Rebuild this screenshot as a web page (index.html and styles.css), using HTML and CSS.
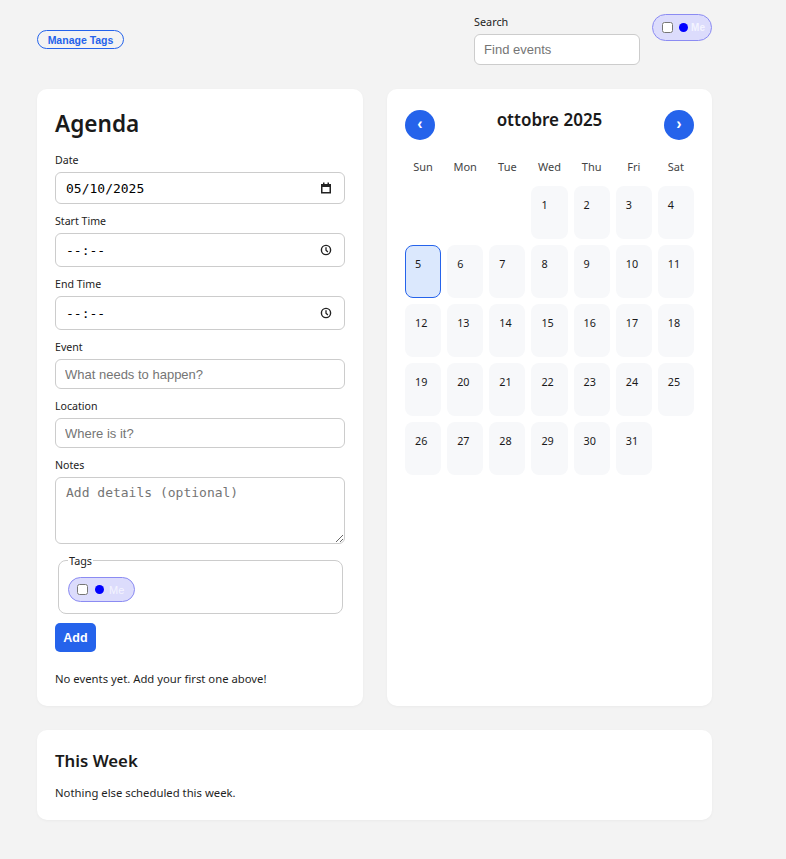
FILE: index.html
```html
<!DOCTYPE html>
<html lang="it">
<head>
<meta charset="utf-8">
<title>Agenda</title>
<link rel="stylesheet" href="styles.css">
</head>
<body>
<div class="page">
  <header class="topbar">
    <button class="manage-btn">Manage Tags</button>
    <div class="top-right">
      <div class="search">
        <label class="search-label" for="search">Search</label>
        <input id="search" class="search-input" type="text" placeholder="Find events">
      </div>
      <label class="pill pill-top"><input type="checkbox"><span class="dot"></span><span class="pill-text bold">Me</span></label>
    </div>
  </header>

  <div class="columns">
    <section class="card agenda">
      <h1 class="title">Agenda</h1>
      <div class="field">
        <label class="lbl">Date</label>
        <div class="inp picker date">
          <input class="picker-value" type="text" value="05/10/2025">
          <svg class="picker-icon" width="12" height="12" viewBox="0 0 12 12"><rect x="1.75" y="2.75" width="8.5" height="8" fill="none" stroke="#222" stroke-width="1.5"/><rect x="1" y="2" width="10" height="3" fill="#222"/><rect x="3" y="0.5" width="1.5" height="2" fill="#222"/><rect x="7.5" y="0.5" width="1.5" height="2" fill="#222"/></svg>
        </div>
      </div>
      <div class="field">
        <label class="lbl">Start Time</label>
        <div class="inp picker time">
          <input class="picker-value" type="text" value="--:--">
          <svg class="picker-icon" width="12" height="12" viewBox="0 0 12 12"><circle cx="6" cy="6" r="4.6" fill="none" stroke="#222" stroke-width="1.4"/><path d="M6 3.2V6.2L7.9 8" fill="none" stroke="#222" stroke-width="1.3"/></svg>
        </div>
      </div>
      <div class="field">
        <label class="lbl">End Time</label>
        <div class="inp picker time">
          <input class="picker-value" type="text" value="--:--">
          <svg class="picker-icon" width="12" height="12" viewBox="0 0 12 12"><circle cx="6" cy="6" r="4.6" fill="none" stroke="#222" stroke-width="1.4"/><path d="M6 3.2V6.2L7.9 8" fill="none" stroke="#222" stroke-width="1.3"/></svg>
        </div>
      </div>
      <div class="field">
        <label class="lbl">Event</label>
        <input class="inp text" type="text" placeholder="What needs to happen?">
      </div>
      <div class="field">
        <label class="lbl">Location</label>
        <input class="inp text" type="text" placeholder="Where is it?">
      </div>
      <div class="field field-notes">
        <label class="lbl">Notes</label>
        <textarea class="inp notes" placeholder="Add details (optional)"></textarea>
      </div>
      <fieldset class="tags">
        <legend>Tags</legend>
        <label class="pill"><input type="checkbox"><span class="dot"></span><span class="pill-text">Me</span></label>
      </fieldset>
      <button class="add-btn">Add</button>
      <p class="empty">No events yet. Add your first one above!</p>
    </section>

    <section class="card calendar">
      <div class="cal-head">
        <button class="nav-btn">&#8249;</button>
        <h2 class="month">ottobre 2025</h2>
        <button class="nav-btn">&#8250;</button>
      </div>
      <div class="grid">
        <div class="dow">Sun</div><div class="dow">Mon</div><div class="dow">Tue</div><div class="dow">Wed</div><div class="dow">Thu</div><div class="dow">Fri</div><div class="dow">Sat</div>
        <div class="blank"></div><div class="blank"></div><div class="blank"></div>
        <div class="day">1</div><div class="day">2</div><div class="day">3</div><div class="day">4</div>
        <div class="day selected">5</div><div class="day">6</div><div class="day">7</div><div class="day">8</div><div class="day">9</div><div class="day">10</div><div class="day">11</div>
        <div class="day">12</div><div class="day">13</div><div class="day">14</div><div class="day">15</div><div class="day">16</div><div class="day">17</div><div class="day">18</div>
        <div class="day">19</div><div class="day">20</div><div class="day">21</div><div class="day">22</div><div class="day">23</div><div class="day">24</div><div class="day">25</div>
        <div class="day">26</div><div class="day">27</div><div class="day">28</div><div class="day">29</div><div class="day">30</div><div class="day">31</div>
      </div>
    </section>
  </div>

  <section class="card week">
    <h2 class="week-title">This Week</h2>
    <p class="week-text">Nothing else scheduled this week.</p>
  </section>
</div>
</body>
</html>
```

FILE: styles.css
```css
html, body {
  margin: 0;
  padding: 0;
  background: #f3f3f3;
}
body {
  font-family: "Noto Sans", "Open Sans", sans-serif;
  color: #1f1f1f;
  font-size: 11.3px;
}
.page {
  width: 675px;
  margin-left: 37px;
  padding-bottom: 39px;
}
.topbar {
  display: flex;
  justify-content: space-between;
  align-items: flex-start;
  padding-top: 14px;
  height: 51px;
  margin-bottom: 24px;
}
.manage-btn {
  margin-top: 16px;
  height: 19px;
  width: 87px;
  padding: 0;
  border: 1px solid #2563eb;
  border-radius: 10px;
  background: transparent;
  color: #2563eb;
  font: bold 10.5px "Liberation Sans", Arial, sans-serif;
}
.top-right {
  display: flex;
  gap: 12px;
  align-items: flex-start;
}
.search {
  display: flex;
  flex-direction: column;
}
.search-label {
  font-size: 10.8px;
  line-height: 16px;
  margin-bottom: 4px;
  color: #222;
}
.search-input {
  box-sizing: border-box;
  width: 166px;
  height: 31px;
  border: 1px solid #ccc;
  border-radius: 6px;
  padding: 0 9px;
  font: 13px "Liberation Sans", Arial, sans-serif;
  background: #fff;
}
.search-input::placeholder, .text::placeholder { color: #757575; }

.pill {
  display: inline-flex;
  align-items: center;
  gap: 5px;
  box-sizing: border-box;
  height: 25px;
  padding: 0 10px 0 8px;
  border: 1px solid #8b8bf2;
  border-radius: 14px;
  background: #dcdcfc;
  font: 11px "Liberation Sans", Arial, sans-serif;
}
.pill input {
  margin: 0 2px 0 0;
  width: 11px;
  height: 11px;
  flex-shrink: 0;
}
.pill-top {
  height: 27px;
  padding: 0 6px 0 9px;
  gap: 3px;
}
.pill-top input { margin-right: 3px; }
.dot {
  flex-shrink: 0;
  width: 9px;
  height: 9px;
  border-radius: 50%;
  background: #0000ff;
}
.pill-text { color: #f4f4ff; }
.pill-text.bold { font-weight: bold; font-size: 10px; }

.columns {
  display: grid;
  grid-template-columns: 326px 325px;
  gap: 24px;
}
.card {
  background: #fff;
  border-radius: 10px;
  padding: 18px;
  box-sizing: border-box;
  box-shadow: 0 1px 3px rgba(0,0,0,0.04);
}
.title {
  margin: 0 0 11px;
  font-size: 22.6px;
  line-height: 34px;
  font-weight: 600;
  color: #1a1a1a;
}
.field {
  display: flex;
  flex-direction: column;
  margin-bottom: 9px;
}
.field-notes { margin-top: 1px; }
.lbl {
  font-size: 10.6px;
  line-height: 16px;
  margin-bottom: 4px;
  color: #222;
}
.inp {
  box-sizing: border-box;
  width: 290px;
  border: 1px solid #ccc;
  border-radius: 6px;
  background: #fff;
  margin: 0;
}
.picker {
  display: flex;
  align-items: center;
  padding: 0 12px 0 10px;
}
.picker-value {
  flex: 1;
  min-width: 0;
  border: none;
  outline: none;
  padding: 0;
  background: transparent;
  font: 13px "DejaVu Sans Mono", "Liberation Mono", monospace;
  color: #000;
}
.picker-icon { flex-shrink: 0; }
.date { height: 32px; }
.time { height: 34px; }
.text {
  height: 30px;
  padding: 0 9px;
  font: 13px "Liberation Sans", Arial, sans-serif;
}
.notes {
  display: block;
  height: 67px;
  padding: 7px 10px;
  font: 13px "DejaVu Sans Mono", "Liberation Mono", monospace;
  resize: vertical;
}
.notes::placeholder { color: #757575; }
.tags {
  margin: 8px 2px 9px 3px;
  border: 1px solid #ccc;
  border-radius: 8px;
  padding: 9px 9px 11px;
}
.tags legend {
  padding: 0 1px;
  font-size: 10.8px;
  color: #222;
}
.add-btn {
  display: block;
  height: 29px;
  width: 41px;
  padding: 0;
  border: none;
  border-radius: 5px;
  background: #2563eb;
  color: #fff;
  font: bold 12.5px "Liberation Sans", Arial, sans-serif;
}
.empty {
  margin: 18px 0 0;
  line-height: 18px;
}

.cal-head {
  display: flex;
  align-items: center;
  justify-content: space-between;
  margin-top: 1px;
}
.nav-btn {
  width: 30px;
  height: 30px;
  border-radius: 50%;
  border: none;
  background: #2563eb;
  color: #fff;
  font: bold 16px "Liberation Sans", Arial, sans-serif;
  padding: 0 0 2px;
}
.month {
  margin: 0 0 10px;
  font-size: 17px;
  font-weight: 600;
  color: #1a1a1a;
}
.grid {
  display: grid;
  grid-template-columns: repeat(7, 1fr);
  column-gap: 6px;
  row-gap: 6px;
  margin-top: 18px;
}
.dow {
  text-align: center;
  font-size: 11px;
  color: #444;
  line-height: 16px;
  margin-bottom: 5px;
}
.day {
  height: 53px;
  box-sizing: border-box;
  border-radius: 8px;
  background: #f7f8fa;
  padding: 10px 9px;
  font-size: 10.8px;
  color: #1a1a1a;
  border: 1px solid transparent;
}
.day.selected {
  background: #dbe8fd;
  border-color: #2563eb;
}

.week {
  margin-top: 24px;
  height: 90px;
}
.week-title {
  margin: 0;
  font-size: 16.8px;
  font-weight: 600;
  line-height: 26px;
  color: #1a1a1a;
}
.week-text {
  margin: 10px 0 0;
  line-height: 18px;
}
```
